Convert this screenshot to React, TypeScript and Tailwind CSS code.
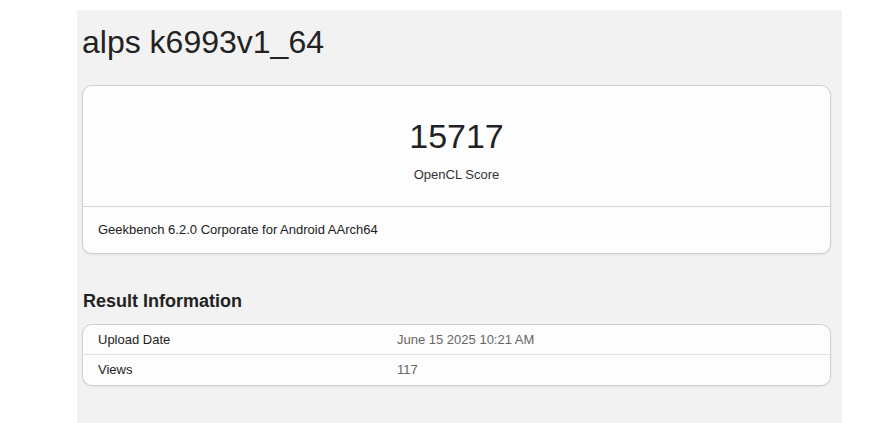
import React from "react";

export default function App() {
  return (
    <div className="w-[878px] h-[423px] bg-white overflow-hidden" style={{ fontFamily: '"Liberation Sans", Arial, sans-serif' }}>
      <div className="ml-[77px] mt-[10px] w-[765px] h-[413px] bg-[#f2f2f2] pl-[5px] pr-[11px] pt-[15px]">
        <h1 className="text-[32px] leading-[35px] text-[#222] font-normal">alps k6993v1_64</h1>
        <div className="mt-[25px] bg-[#fdfdfd] border border-[#cfcfcf] rounded-[10px] shadow-[0_1px_2px_rgba(0,0,0,0.08)]">
          <div className="h-[120px] flex flex-col items-center pt-[34px]">
            <div className="text-[34px] leading-[32px] text-[#222]">15717</div>
            <div className="mt-[15px] text-[13px] leading-[15px] text-[#333]">OpenCL Score</div>
          </div>
          <div className="border-t border-[#d5d5d5] h-[47px] flex items-center px-[15px] text-[13px] text-[#222]">
            Geekbench 6.2.0 Corporate for Android AArch64
          </div>
        </div>
        <h2 className="mt-[37px] text-[18px] leading-[20px] font-bold text-[#222] pl-px">Result Information</h2>
        <div className="mt-[13px] bg-[#fdfdfd] border border-[#d0d0d0] rounded-[10px] shadow-[0_1px_2px_rgba(0,0,0,0.08)] text-[13px]">
          <div className="h-[30px] flex items-center border-b border-[#e2e2e2]">
            <div className="w-[314px] pl-[15px] text-[#222]">Upload Date</div>
            <div className="text-[#666]">June 15 2025 10:21 AM</div>
          </div>
          <div className="h-[30px] flex items-center">
            <div className="w-[314px] pl-[15px] text-[#222]">Views</div>
            <div className="text-[#666]">117</div>
          </div>
        </div>
      </div>
    </div>
  );
}
